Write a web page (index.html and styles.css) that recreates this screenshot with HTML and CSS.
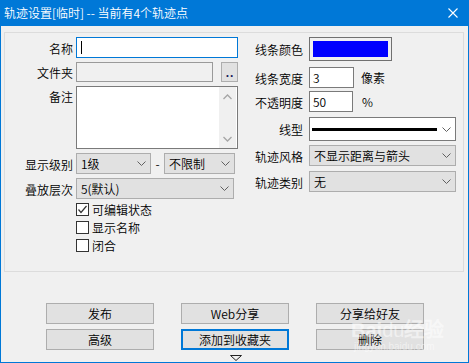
FILE: index.html
```html
<!DOCTYPE html>
<html lang="zh-CN">
<head>
<meta charset="utf-8">
<title>轨迹设置</title>
<link rel="stylesheet" href="styles.css">
</head>
<body>
<div class="window">
  <div class="titlebar">
    <span class="title">轨迹设置[临时] -- 当前有4个轨迹点</span>
    <svg class="close" width="10" height="10" viewBox="0 0 10 10"><path d="M0.5 0.5 L9.5 9.5 M9.5 0.5 L0.5 9.5" stroke="#fff" stroke-width="1.1" fill="none"/></svg>
  </div>
  <div class="client">
    <div class="group">
      <div class="col left">
        <div class="lrow">
          <span class="lbl">名称</span>
          <div class="tb focus w162"><span class="caret"></span></div>
        </div>
        <div class="lrow">
          <span class="lbl">文件夹</span>
          <div class="tb disabled w137 h20"></div>
          <div class="dots">..</div>
        </div>
        <div class="lrow top">
          <span class="lbl memo-lbl">备注</span>
          <div class="memo">
            <div class="vscroll">
              <svg width="9" height="6" viewBox="0 0 9 6"><path d="M0.5 5 L4.5 1 L8.5 5" stroke="#a6a6a6" stroke-width="1.3" fill="none"/></svg>
              <svg width="9" height="6" viewBox="0 0 9 6"><path d="M0.5 1 L4.5 5 L8.5 1" stroke="#a6a6a6" stroke-width="1.3" fill="none"/></svg>
            </div>
          </div>
        </div>
        <div class="lrow">
          <span class="lbl">显示级别</span>
          <div class="cb w75"><span>1级</span><svg class="chev" width="9" height="5" viewBox="0 0 9 5"><path d="M0.5 0.5 L4.5 4.5 L8.5 0.5" stroke="#606060" stroke-width="1" fill="none"/></svg></div>
          <span class="dash">-</span>
          <div class="cb w71"><span>不限制</span><svg class="chev" width="9" height="5" viewBox="0 0 9 5"><path d="M0.5 0.5 L4.5 4.5 L8.5 0.5" stroke="#606060" stroke-width="1" fill="none"/></svg></div>
        </div>
        <div class="lrow">
          <span class="lbl">叠放层次</span>
          <div class="cb w158"><span>5(默认)</span><svg class="chev" width="9" height="5" viewBox="0 0 9 5"><path d="M0.5 0.5 L4.5 4.5 L8.5 0.5" stroke="#606060" stroke-width="1" fill="none"/></svg></div>
        </div>
        <div class="checks">
          <div class="chk"><span class="box"><svg width="11" height="11" viewBox="0 0 11 11"><path d="M1.5 5.5 L4 8.5 L9.5 2" stroke="#333" stroke-width="1.2" fill="none"/></svg></span><span>可编辑状态</span></div>
          <div class="chk"><span class="box"></span><span>显示名称</span></div>
          <div class="chk"><span class="box"></span><span>闭合</span></div>
        </div>
      </div>
      <div class="col right">
        <div class="rrow r1">
          <span class="rlbl">线条颜色</span>
          <div class="colorbox"><div class="swatch"></div></div>
        </div>
        <div class="rrow r2">
          <span class="rlbl">线条宽度</span>
          <div class="tb w45 num">3</div>
          <span class="unit">像素</span>
        </div>
        <div class="rrow r3">
          <span class="rlbl">不透明度</span>
          <div class="tb w44 num">50</div>
          <span class="unit pct">%</span>
        </div>
        <div class="rrow r4">
          <span class="rlbl">线型</span>
          <div class="linesel"><span class="line"></span><svg class="chev" width="9" height="5" viewBox="0 0 9 5"><path d="M0.5 0.5 L4.5 4.5 L8.5 0.5" stroke="#606060" stroke-width="1" fill="none"/></svg></div>
        </div>
        <div class="rrow r5">
          <span class="rlbl">轨迹风格</span>
          <div class="cb w147"><span>不显示距离与箭头</span><svg class="chev" width="9" height="5" viewBox="0 0 9 5"><path d="M0.5 0.5 L4.5 4.5 L8.5 0.5" stroke="#606060" stroke-width="1" fill="none"/></svg></div>
        </div>
        <div class="rrow r6">
          <span class="rlbl">轨迹类别</span>
          <div class="cb w147"><span>无</span><svg class="chev" width="9" height="5" viewBox="0 0 9 5"><path d="M0.5 0.5 L4.5 4.5 L8.5 0.5" stroke="#606060" stroke-width="1" fill="none"/></svg></div>
        </div>
      </div>
    </div>
    <div class="buttons">
      <div class="btn">发布</div>
      <div class="btn">Web分享</div>
      <div class="btn">分享给好友</div>
      <div class="btn">高级</div>
      <div class="btn default">添加到收藏夹</div>
      <div class="btn">删除</div>
    </div>
    <div class="more">
      <svg width="12" height="6" viewBox="0 0 12 6"><path d="M0.5 0.5 L11.5 0.5 L6 5.5 Z" stroke="#222" stroke-width="1" fill="none"/></svg>
    </div>
    <div class="watermark">
      <span class="wm-big">Bai<span class="paw">du</span>经验</span>
      <span class="wm-small">jingyan.baidu.com</span>
    </div>
  </div>
</div>
</body>
</html>
```

FILE: styles.css
```css
* { box-sizing: border-box; }
html, body { margin: 0; padding: 0; }
body {
  font-family: "Noto Sans CJK SC", "Noto Sans", sans-serif;
  font-size: 12px;
  font-weight: 350;
  line-height: 16px;
  color: #000;
  background: #f0f0f0;
}
.window {
  width: 469px;
  height: 363px;
  display: flex;
  flex-direction: column;
  background: #f0f0f0;
}
.titlebar {
  height: 26px;
  flex: none;
  background: #0078d7;
  color: #fff;
  display: flex;
  align-items: center;
  padding: 0 11px 0 4px;
}
.title { flex: 1; white-space: nowrap; }
.close { flex: none; }
.client {
  flex: 1;
  position: relative;
  border: 1px solid #0078d7;
  border-top: 0;
  display: flex;
  flex-direction: column;
  overflow: hidden;
}
.group {
  margin: 6px 0 0 3px;
  width: 460px;
  height: 240px;
  border: 1px solid #dcdcdc;
  display: flex;
  flex: none;
}
.col { display: flex; flex-direction: column; }
.left { width: 233px; }
.right { margin-left: 3px; }

.lrow { display: flex; align-items: center; margin-top: 4px; }
.lrow.top { align-items: flex-start; }
.lbl { width: 68px; margin-right: 3px; text-align: right; white-space: nowrap; padding-top: 2px; }
.memo-lbl { padding-top: 3px; }

.tb {
  height: 21px;
  border: 1px solid #7a7a7a;
  background: #fff;
  display: flex;
  align-items: center;
}
.tb.focus { border-color: #0078d7; }
.tb.disabled { background: #f0f0f0; border-color: #9a9a9a; }
.h20 { height: 20px; }
.w162 { width: 162px; }
.w137 { width: 137px; }
.w45 { width: 45px; }
.w44 { width: 44px; }
.w75 { width: 75px; }
.w71 { width: 71px; }
.w158 { width: 158px; }
.w147 { width: 147px; }
.caret { width: 1px; height: 13px; background: #000; margin-left: 4px; }
.dots {
  width: 17px;
  height: 20px;
  margin-left: 8px;
  background: #e1e1e1;
  border: 1px solid #adadad;
  color: #1a1a5a;
  font-family: "Liberation Sans", sans-serif;
  font-weight: bold;
  font-size: 12px;
  line-height: 20px;
  text-align: center;
  letter-spacing: 1px;
  padding-left: 1px;
}
.memo {
  width: 162px;
  height: 63px;
  border: 1px solid #7a7a7a;
  background: #fff;
  display: flex;
  justify-content: flex-end;
  padding: 0 1px 0 0;
}
.vscroll {
  width: 17px;
  height: 61px;
  background: #f0f0f0;
  display: flex;
  flex-direction: column;
  justify-content: space-between;
  align-items: center;
  padding: 7px 0 6px;
}
.vscroll svg { display: block; }

.cb {
  height: 21px;
  border: 1px solid #adadad;
  background: #e1e1e1;
  display: flex;
  align-items: center;
  padding: 0 4px 0 4px;
  white-space: nowrap;
}
.cb span { flex: 1; }
.chev { flex: none; display: block; }
.dash { width: 13px; text-align: center; }

.checks { margin-top: 4px; margin-left: 71px; display: flex; flex-direction: column; }
.chk { display: flex; align-items: center; height: 13px; margin-bottom: 5px; }
.box {
  width: 13px;
  height: 13px;
  border: 1px solid #333;
  background: #fff;
  margin-right: 3px;
  display: flex;
  align-items: center;
  justify-content: center;
}
.box svg { display: block; }

.rrow { display: flex; align-items: center; }
.rlbl { width: 62px; margin-right: 6px; text-align: right; white-space: nowrap; padding-top: 2px; }
.r1 { margin-top: 4px; }
.r2 { margin-top: 6px; }
.r3 { margin-top: 3px; }
.r4 { margin-top: 5px; }
.r5 { margin-top: 4px; }
.r6 { margin-top: 5px; }
.colorbox {
  width: 83px;
  height: 24px;
  border: 1px solid #707070;
  background: #f0f0f0;
  padding: 3px;
}
.swatch { width: 100%; height: 100%; background: #0000ff; }
.num { padding-left: 3px; }
.unit { margin-left: 7px; }
.unit.pct { margin-left: 9px; }
.linesel {
  width: 147px;
  height: 24px;
  border: 1px solid #7a7a7a;
  background: #fff;
  display: flex;
  align-items: center;
  padding: 0 4px 0 2px;
}
.line { display: block; width: 125px; height: 3px; background: #000; margin-right: auto; }

.buttons {
  margin: 31px 0 0 45px;
  display: grid;
  grid-template-columns: repeat(3, 108px);
  grid-auto-rows: 21px;
  column-gap: 27px;
  row-gap: 5px;
}
.btn {
  border: 1px solid #adadad;
  background: #e1e1e1;
  display: flex;
  align-items: center;
  justify-content: center;
  white-space: nowrap;
}
.btn.default { border: 2px solid #0078d7; }
.more { margin: 5px 0 0 229px; height: 6px; }
.more svg { display: block; }

.watermark {
  position: absolute;
  left: 350px;
  top: 293px;
  display: flex;
  flex-direction: column;
  align-items: flex-start;
  color: rgba(255, 255, 255, 0.5);
  pointer-events: none;
}
.wm-big { font-family: "Liberation Sans", sans-serif; font-size: 20px; line-height: 22px; font-weight: bold; }
.wm-big .paw { font-weight: normal; }
.wm-small { font-family: "Liberation Sans", sans-serif; font-size: 10px; line-height: 12px; margin-left: 3px; }
```
